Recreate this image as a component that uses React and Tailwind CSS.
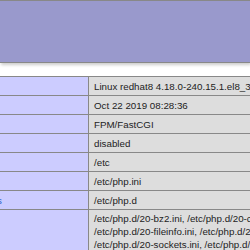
import React from "react";

const rows = [
  { value: "Linux redhat8 4.18.0-240.15.1.el8_3.x86_64 #1 SMP Wed Feb 3 03:12:15 EST 2021 x86_64" },
  { value: "Oct 22 2019 08:28:36" },
  { value: "FPM/FastCGI" },
  { value: "disabled" },
  { value: "/etc" },
  { value: "/etc/php.ini" },
  { value: "/etc/php.d", link: true },
];

const iniLines = [
  "/etc/php.d/20-bz2.ini, /etc/php.d/20-calendar.ini, /etc/php.d/20-ctype.ini,",
  "/etc/php.d/20-fileinfo.ini, /etc/php.d/20-ftp.ini, /etc/php.d/20-gettext.ini,",
  "/etc/php.d/20-sockets.ini, /etc/php.d/20-sqlite3.ini, /etc/php.d/20-tokenizer.ini,",
  "/etc/php.d/20-xml.ini, /etc/php.d/20-xmlwriter.ini, /etc/php.d/20-xsl.ini,",
];

const App = () => {
  return (
    <div className="h-[250px] w-[250px] overflow-hidden bg-white font-['Liberation_Sans',Arial,sans-serif] text-[9.75px] leading-[13px] text-[#222]">
      {/* Header */}
      <div className="h-[63px] border-y border-[#888] bg-[#9999cc] shadow-[1px_2px_3px_#ccc]" />

      {/* Info table */}
      <div className="mt-[13px] border-t border-[#888]">
        {rows.map((row, i) => (
          <div key={i} className="flex border-b border-[#888]">
            <div className="w-[88px] shrink-0 overflow-hidden bg-[#ccccff] pt-[3px] pb-[2px] whitespace-nowrap">
              {row.link ? <span className="-ml-[3px] inline-block text-[#3366cc]">s</span> : "\u00a0"}
            </div>
            <div className="min-w-0 flex-1 overflow-hidden whitespace-nowrap border-l border-[#888] bg-[#dddddd] pt-[3px] pb-[2px] pl-[5px]">
              {row.value}
            </div>
          </div>
        ))}
        <div className="flex border-b border-[#888]">
          <div className="w-[88px] shrink-0 bg-[#ccccff]" />
          <div className="min-w-0 flex-1 overflow-hidden whitespace-nowrap border-l border-[#888] bg-[#dddddd] pt-[2px] pb-[2px] pl-[5px]">
            {iniLines.map((line, i) => (
              <div key={i}>{line}</div>
            ))}
          </div>
        </div>
      </div>
    </div>
  );
};

export default App;
